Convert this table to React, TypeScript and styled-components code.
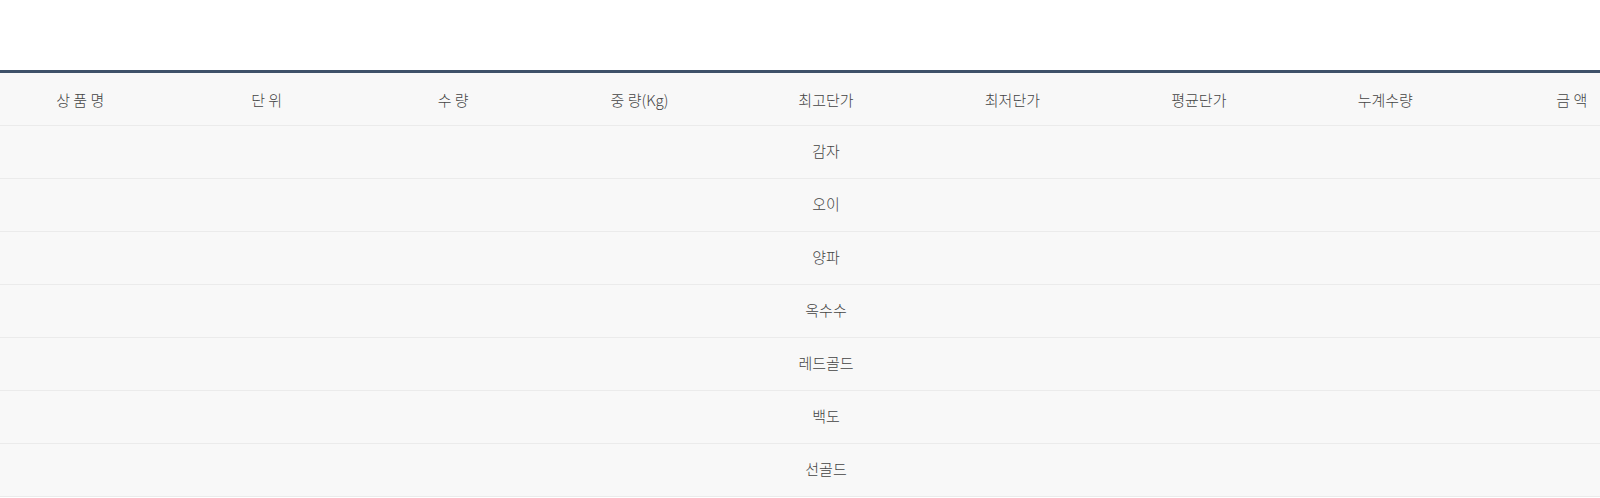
import styled, { createGlobalStyle } from "styled-components";

const GlobalStyle = createGlobalStyle`
  html, body {
    margin: 0;
    padding: 0;
    background: #ffffff;
    overflow: hidden;
  }
  body {
    font-family: "Noto Sans CJK KR", "Noto Sans", sans-serif;
  }
`;

const Page = styled.div`
  width: 1600px;
  height: 498px;
  padding-top: 70px;
  box-sizing: border-box;
  overflow: hidden;
`;

const PriceTable = styled.table`
  width: 1678px;
  margin-left: -13px;
  border-collapse: collapse;
  table-layout: fixed;
  border-top: 3px solid #3e5169;
  background: #f8f8f8;
`;

const HeadCell = styled.th`
  height: 52px;
  padding: 0;
  font-size: 15px;
  font-weight: 300;
  color: #444444;
  text-align: center;
  border-bottom: 1px solid #ebebeb;
`;

const Cell = styled.td`
  height: 48px;
  padding: 0 0 4px;
  font-size: 15px;
  font-weight: 300;
  color: #444444;
  text-align: center;
  border-bottom: 1px solid #ebebeb;
`;

const headers = [
  "상 품 명",
  "단 위",
  "수 량",
  "중 량(Kg)",
  "최고단가",
  "최저단가",
  "평균단가",
  "누계수량",
  "금 액",
];

const products = ["감자", "오이", "양파", "옥수수", "레드골드", "백도", "선골드"];

function App() {
  return (
    <>
      <GlobalStyle />
      <Page>
        <PriceTable>
          <thead>
            <tr>
              {headers.map((h) => (
                <HeadCell key={h}>{h}</HeadCell>
              ))}
            </tr>
          </thead>
          <tbody>
            {products.map((p) => (
              <tr key={p}>
                <Cell colSpan={9}>{p}</Cell>
              </tr>
            ))}
          </tbody>
        </PriceTable>
      </Page>
    </>
  );
}

export default App;
